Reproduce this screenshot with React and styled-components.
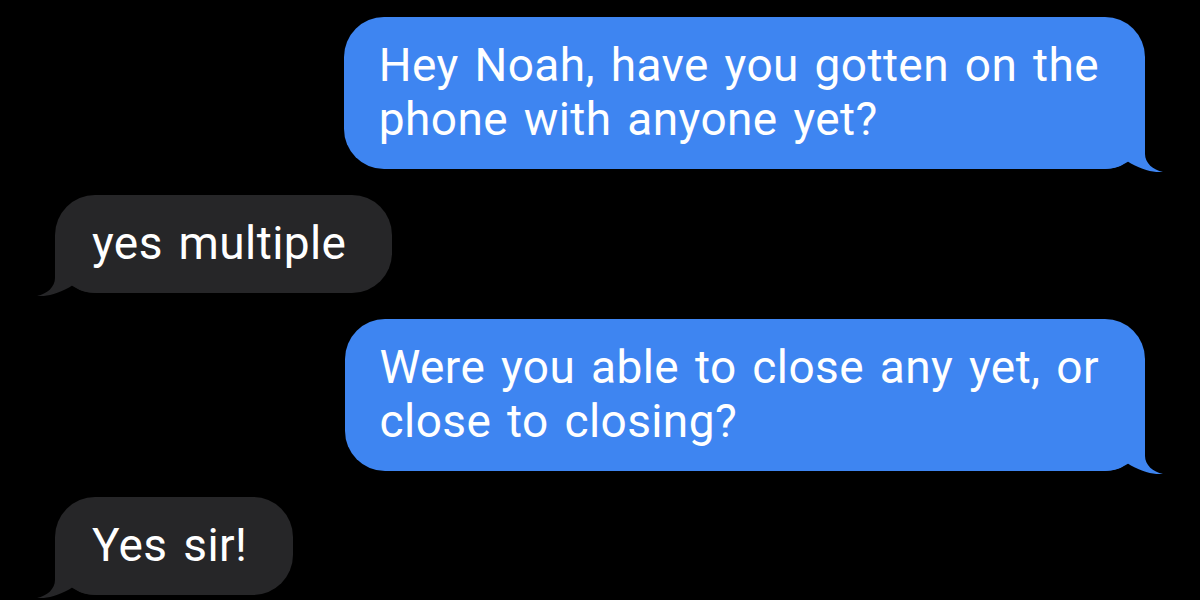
import React from 'react';
import styled, { createGlobalStyle } from 'styled-components';

const GlobalStyle = createGlobalStyle`
    html, body {
        margin: 0;
        padding: 0;
        background: #000;
    }
`;

const BLUE = '#3e85f1';
const GRAY = '#262628';

const messages = [
    { from: 'me', lines: ['Hey Noah, have you gotten on the', 'phone with anyone yet?'] },
    { from: 'them', lines: ['yes multiple'] },
    { from: 'me', lines: ['Were you able to close any yet, or', 'close to closing?'] },
    { from: 'them', lines: ['Yes sir!'] },
];

// bubble's bottom corner plus the little hook; drawn for the right side, mirrored for the left
const Tail = ({ side, color }) => (
    <TailSvg side={side} width="60" height="45" viewBox="0 0 60 45">
        <path
            d="M42 0 L42 27 C42 36 50 43 60 45 C52 46 38 43 24 34 C19 39 11 42 0 42 L0 0 Z"
            fill={color}
        />
    </TailSvg>
);

const App = () => {
    return (
        <>
            <GlobalStyle />
            <Thread>
                {messages.map((m, i) => {
                    const mine = m.from === 'me';
                    return (
                        <Row key={i} mine={mine}>
                            <Bubble mine={mine}>
                                {m.lines.map((l, j) => (
                                    <Line key={j}>{l}</Line>
                                ))}
                                <Tail side={mine ? 'right' : 'left'} color={mine ? BLUE : GRAY} />
                            </Bubble>
                        </Row>
                    );
                })}
            </Thread>
        </>
    );
};

export default App;

const Thread = styled.div`
    width: 1200px;
    height: 600px;
    box-sizing: border-box;
    padding: 17px 55px 0 55px;
    display: flex;
    flex-direction: column;
    gap: 26px;
    overflow: hidden;
    font-family: Roboto, 'Liberation Sans', sans-serif;
`;

const Row = styled.div`
    display: flex;
    justify-content: ${p => (p.mine ? 'flex-end' : 'flex-start')};
`;

const Bubble = styled.div`
    position: relative;
    background: ${p => (p.mine ? BLUE : GRAY)};
    color: #fff;
    border-radius: 40px;
    padding: 21px 46px 23px ${p => (p.mine ? '35px' : '37px')};
    font-size: 46px;
    line-height: 54px;
    letter-spacing: 0.4px;
    word-spacing: 4px;
`;

const Line = styled.div`
    position: relative;
    z-index: 1;
    white-space: nowrap;
`;

const TailSvg = styled.svg`
    position: absolute;
    bottom: -3px;
    ${p =>
        p.side === 'right'
            ? 'right: -18px;'
            : 'left: -18px; transform: scaleX(-1);'}
`;
